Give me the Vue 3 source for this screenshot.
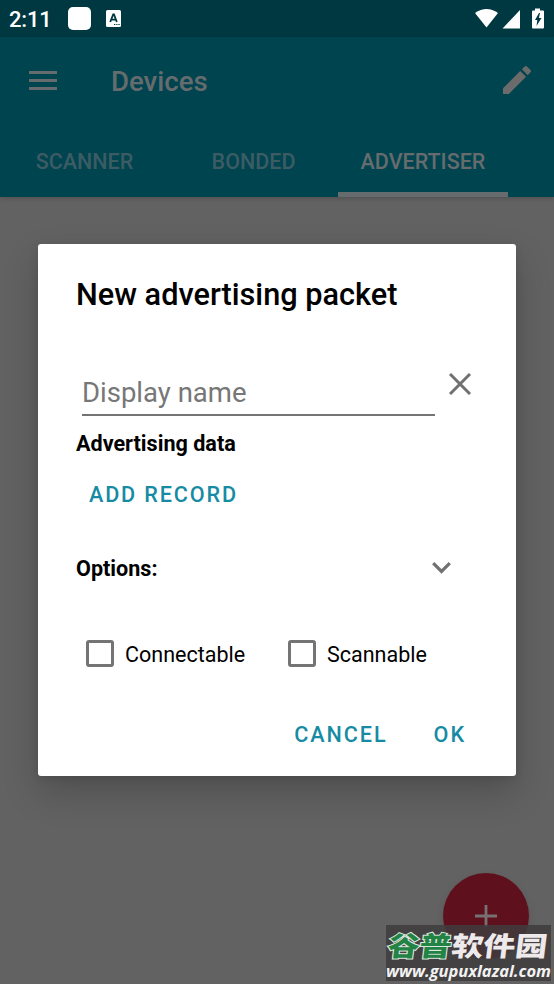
<template>
  <div class="screen">
    <div class="status-bar">
      <span class="time">2:11</span>
      <span class="app-badge"></span>
      <svg class="lang-icon" width="15" height="17" viewBox="0 0 15 17">
        <rect width="15" height="17" rx="1.500" fill="#fff" />
        <path d="M4.200 12 7.200 4.500h.8L10.800 12M5.200 9.600h4.600" fill="none" stroke="#003842" stroke-width="1.800" />
        <path d="M8 14.500h1.300M10.200 14.500h1.300M12.400 14.500h1.300" stroke="#003842" stroke-width="1.200" />
      </svg>
      <span class="spacer"></span>
      <svg class="system-icons" width="71" height="22" viewBox="0 0 71 22">
        <path d="M1 5Q12.500-3 24 5L12.500 19.500z" fill="#fff" />
        <path d="M46 2v18.500H28.500z" fill="#fff" />
        <path d="M61 .5h5v2h3q1 0 1 1v16q0 1-1 1H59q-1 0-1-1v-16q0-1 1-1h2z" fill="#fff" />
        <path d="M65 5 61 12h2.300L62.500 18 67.500 10h-2.600L66 5z" fill="#003842" />
      </svg>
    </div>

    <header class="app-bar">
      <div class="toolbar">
        <svg class="menu-icon" width="28" height="19" viewBox="0 0 28 19">
          <path d="M0 1.500h28M0 9.500h28M0 17.500h28" stroke="#666c6e" stroke-width="3" />
        </svg>
        <h1>Devices</h1>
        <svg class="edit-icon" width="28" height="28" viewBox="3 3 18 18">
          <path fill="#6b6b6b" d="M3 17.250V21h3.750L17.810 9.940l-3.750-3.750L3 17.250zM20.710 7.040c.39-.39.39-1.020 0-1.410l-2.340-2.340c-.39-.39-1.020-.39-1.410 0l-1.830 1.830 3.750 3.750 1.830-1.830z" />
        </svg>
      </div>
      <nav class="tabs">
        <div v-for="tab in tabs" :key="tab" class="tab" :class="{ active: tab === activeTab }">{{ tab }}</div>
      </nav>
    </header>

    <div class="fab">
      <svg width="22" height="22" viewBox="0 0 22 22">
        <path d="M11 0v22M0 11h22" stroke="#777174" stroke-width="2.800" />
      </svg>
    </div>

    <div class="dialog">
      <h2>New advertising packet</h2>
      <div class="name-row">
        <div class="name-field"><span>Display name</span></div>
        <svg class="close-icon" width="22" height="22" viewBox="0 0 22 22">
          <path d="M1 1 21 21M21 1 1 21" stroke="#717171" stroke-width="3" />
        </svg>
      </div>
      <h3 class="data-title">Advertising data</h3>
      <button class="add-record">ADD RECORD</button>
      <div class="options-row">
        <h3>Options:</h3>
        <svg width="19" height="12" viewBox="0 0 19 12">
          <path d="M1.200 1.200 9.500 9.500 17.800 1.200" fill="none" stroke="#717171" stroke-width="3.200" />
        </svg>
      </div>
      <div class="checks">
        <label v-for="option in options" :key="option" class="check">
          <span class="box"></span>
          <span class="check-label">{{ option }}</span>
        </label>
      </div>
      <div class="actions">
        <button class="cancel">CANCEL</button>
        <button class="ok">OK</button>
      </div>
    </div>

    <div class="watermark">
      <div class="wm-name">
        <span class="wm-green">谷普</span><span class="wm-white">软件园</span>
      </div>
      <div class="wm-url">www.gupuxlazal.com</div>
    </div>
  </div>
</template>

<script setup>
import { ref } from 'vue'

const tabs = ['SCANNER', 'BONDED', 'ADVERTISER']
const activeTab = ref('ADVERTISER')
const options = ['Connectable', 'Scannable']
</script>

<style>
body {
  margin: 0;
  background: #626262;
}
</style>

<style scoped>
.screen {
  position: relative;
  width: 554px;
  height: 984px;
  overflow: hidden;
  background: #626262;
  font-family: Roboto, "Liberation Sans", sans-serif;
}

.status-bar {
  display: flex;
  align-items: center;
  box-sizing: border-box;
  height: 37px;
  padding: 0 9px;
  background: #003842;
  color: #fff;
}

.time {
  width: 59px;
  padding-top: 1px;
  font-size: 22px;
  font-weight: 500;
  letter-spacing: -0.2px;
}

.app-badge {
  width: 23px;
  height: 23px;
  margin-top: -1px;
  border-radius: 5px;
  background: #fff;
}

.lang-icon {
  margin-left: 15px;
}

.spacer {
  flex: 1;
}

.app-bar {
  height: 160px;
  background: #004450;
  box-shadow: 0 1px 5px rgba(0, 0, 0, 0.2);
}

.toolbar {
  display: flex;
  align-items: center;
  height: 87px;
  padding: 0 23px 0 29px;
}

.edit-icon {
  margin-top: -2px;
}

h1 {
  flex: 1;
  margin: 2px 0 0 54px;
  color: #666c6e;
  font-size: 27.600px;
  font-weight: 500;
}

.tabs {
  display: grid;
  grid-template-columns: 169px 169px 170px;
  height: 73px;
}

.tab {
  box-sizing: border-box;
  padding-top: 24px;
  border-bottom: 5px solid transparent;
  color: #3c5c64;
  font-size: 21.500px;
  font-weight: 500;
  line-height: 27px;
  text-align: center;
}

.tab.active {
  border-color: #666c6e;
  color: #666c6e;
}

.fab {
  position: absolute;
  top: 873px;
  left: 443px;
  display: flex;
  align-items: center;
  justify-content: center;
  width: 86px;
  height: 86px;
  border-radius: 50%;
  background: #5f101d;
  box-shadow: 0 4px 9px rgba(0, 0, 0, 0.1);
}

.dialog {
  position: absolute;
  top: 244px;
  left: 38px;
  box-sizing: border-box;
  width: 478px;
  height: 532px;
  padding: 32px 38px 0;
  border-radius: 3px;
  background: #fff;
  box-shadow: 0 16px 36px rgba(0, 0, 0, 0.2), 0 2px 8px rgba(0, 0, 0, 0.1);
  color: #000;
}

h2 {
  margin: 0;
  font-size: 30.700px;
  font-weight: 500;
  line-height: 38px;
  white-space: nowrap;
}

.name-row {
  display: flex;
  height: 73px;
  margin: 29px 0 0 6px;
}

.name-field {
  display: flex;
  align-items: flex-end;
  box-sizing: border-box;
  width: 353px;
  padding-bottom: 5px;
  border-bottom: 2px solid #747474;
  color: #777;
  font-size: 27.500px;
}

.close-icon {
  margin: 30px 0 0 14px;
}

h3 {
  margin: 0;
  font-size: 21.600px;
  font-weight: 700;
  line-height: 26px;
}

.data-title {
  margin-top: 15px;
}

button {
  padding: 0;
  border: 0;
  background: none;
  color: #168ba3;
  font-family: inherit;
  font-size: 21.600px;
  font-weight: 500;
  line-height: 26px;
  letter-spacing: 1.950px;
}

.add-record {
  display: block;
  margin: 25px 0 0 13px;
  letter-spacing: 1.850px;
}

.options-row {
  display: flex;
  align-items: center;
  justify-content: space-between;
  margin-top: 48px;
  padding-right: 27px;
}

.options-row svg {
  margin-top: -2px;
}

.checks {
  display: flex;
  margin: 58px 0 0 10px;
}

.check {
  display: flex;
  flex: none;
  align-items: center;
  width: 202px;
  font-size: 21.500px;
}

.check-label {
  padding-top: 2px;
}

.box {
  box-sizing: border-box;
  width: 28px;
  height: 27px;
  margin-right: 11px;
  border: 3px solid #747474;
  border-radius: 3px;
}

.actions {
  display: flex;
  justify-content: flex-end;
  gap: 46px;
  margin-top: 55px;
  padding-right: 12px;
}

.watermark {
  position: absolute;
  top: 925px;
  left: 386px;
  width: 165px;
  height: 56px;
  background: rgba(64, 60, 61, 0.85);
  white-space: nowrap;
}

.wm-name {
  width: 140px;
  height: 36px;
  padding-left: 2px;
  font-family: "Noto Sans CJK SC", sans-serif;
  font-size: 27px;
  font-weight: 900;
  line-height: 39px;
  transform: scaleX(1.18) skewX(-6deg);
  transform-origin: left center;
}

.wm-green {
  color: #228345;
  paint-order: stroke;
  -webkit-text-stroke: 2px #dce8df;
}

.wm-white {
  color: #eee9ea;
}

.wm-url {
  color: #f2f2f2;
  font-family: "Open Sans", sans-serif;
  font-size: 16.500px;
  font-style: italic;
  font-weight: 700;
  line-height: 19px;
  letter-spacing: -0.020px;
}
</style>
